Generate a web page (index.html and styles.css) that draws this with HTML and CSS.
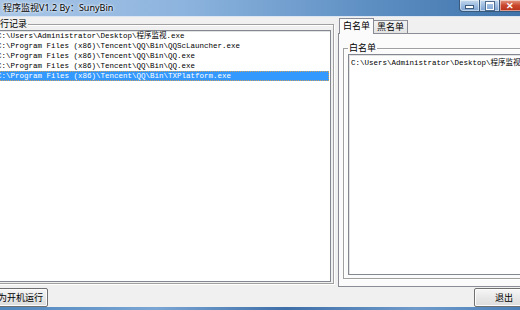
FILE: index.html
```html
<!DOCTYPE html>
<html lang="zh-CN">
<head>
    <meta charset="UTF-8">
    <title>程序监视V1.2 By：SunyBin</title>
    <link rel="stylesheet" href="styles.css">
</head>
<body>
    <div class="window">
        <!-- Title bar -->
        <div class="titlebar">
            <span class="title">程序监视V1.2 By：SunyBin</span>
            <div class="controls">
                <span class="ctl ctl-min"><i></i></span>
                <span class="ctl ctl-max"><i></i></span>
                <span class="ctl ctl-close">✕</span>
            </div>
        </div>

        <div class="client">
            <div class="main">
                <!-- Run log -->
                <div class="group log-group">
                    <div class="group-label">运行记录</div>
                    <ul class="listbox log-list">
                        <li>C:\Users\Administrator\Desktop\程序监视.exe</li>
                        <li>C:\Program Files (x86)\Tencent\QQ\Bin\QQScLauncher.exe</li>
                        <li>C:\Program Files (x86)\Tencent\QQ\Bin\QQ.exe</li>
                        <li>C:\Program Files (x86)\Tencent\QQ\Bin\QQ.exe</li>
                        <li class="selected">C:\Program Files (x86)\Tencent\QQ\Bin\TXPlatform.exe</li>
                    </ul>
                </div>

                <!-- White / black list tabs -->
                <div class="tabs">
                    <div class="tab-strip">
                        <span class="tab active">白名单</span>
                        <span class="tab">黑名单</span>
                    </div>
                    <div class="tab-page">
                        <div class="group white-group">
                            <div class="group-label">白名单</div>
                            <ul class="listbox white-list">
                                <li>C:\Users\Administrator\Desktop\程序监视.exe</li>
                            </ul>
                        </div>
                    </div>
                </div>
            </div>

            <div class="button-row">
                <button class="btn btn-autorun">设为开机运行</button>
                <button class="btn btn-exit">退出</button>
            </div>
        </div>

        <div class="taskbar"></div>
    </div>
</body>
</html>
```

FILE: styles.css
```css
html, body {
    margin: 0;
    padding: 0;
    overflow: hidden;
}

body {
    width: 520px;
    height: 310px;
    font-family: "Noto Sans", "Noto Sans CJK SC", sans-serif;
    font-size: 9px;
    color: #000;
    background-color: #f0f0f0;
}

.window {
    display: flex;
    flex-direction: column;
    width: 520px;
    height: 310px;
}

/* Title bar */
.titlebar {
    height: 16px;
    display: flex;
    align-items: flex-start;
    justify-content: space-between;
    background: linear-gradient(to right, #a9c6e6 0%, #8db4de 35%, #5f90c4 70%, #3f73aa 100%);
    border-bottom: 1px solid #dbe6f2;
}

.title {
    padding: 2px 0 0 3px;
    line-height: 11px;
    color: #000;
    text-shadow: 0 0 3px #fff, 0 0 3px #fff;
    white-space: nowrap;
}

.controls {
    display: flex;
    margin-right: -15px;
}

.ctl {
    display: flex;
    align-items: center;
    justify-content: center;
    width: 19px;
    height: 11px;
    border: 1px solid #38587c;
    border-top: none;
    background: linear-gradient(#c6d9ee, #9bbbe0 50%, #7aa0cf);
    box-shadow: inset 0 0 0 1px rgba(255, 255, 255, 0.5);
}

.ctl-min {
    border-radius: 0 0 0 4px;
}

.ctl-min i {
    display: block;
    width: 7px;
    height: 2px;
    margin-top: 3px;
    background: #fff;
    border: 1px solid #3d5a7c;
}

.ctl-max {
    border-left: none;
}

.ctl-max i {
    display: block;
    width: 6px;
    height: 5px;
    border: 1px solid #fff;
    border-top-width: 2px;
    outline: 1px solid #4d6c90;
}

.ctl-close {
    width: 28px;
    border-left: none;
    background: linear-gradient(#e49a86, #c9462c 50%, #b8311a);
    color: #fff;
    font-size: 9px;
    font-weight: bold;
    justify-content: flex-start;
    padding-left: 6px;
}

/* Client area */
.client {
    flex: 1;
    display: flex;
    flex-direction: column;
}

.main {
    display: flex;
    height: 270px;
}

.group {
    border: 1px solid #a0a0a0;
    box-shadow: 1px 1px 0 #fff, inset 1px 1px 0 #fff;
}

.group-label {
    display: inline-block;
    margin-top: -7px;
    padding: 0 1px;
    line-height: 12px;
    background-color: #f0f0f0;
    white-space: nowrap;
}

.log-group {
    flex: none;
    width: 337px;
    height: 257px;
    margin: 7px 0 0 -8px;
    padding: 0 2px 1px 1px;
    display: flex;
    flex-direction: column;
}

.log-group .group-label {
    margin-left: -4px;
    align-self: flex-start;
}

.listbox {
    list-style: none;
    margin: 0;
    padding: 0 0 0 2px;
    background-color: #fff;
    border: 1px solid #828790;
    box-shadow: inset 1px 1px 0 #e3e3e3;
    font-family: "Liberation Mono", "Noto Sans CJK SC", monospace;
    font-size: 7.5px;
    overflow: hidden;
}

.listbox li {
    height: 10px;
    line-height: 10px;
    white-space: nowrap;
}

.log-list {
    flex: 1;
    margin-top: 0;
}

.log-list li.selected {
    background-color: #3399ff;
    color: #fff;
    outline: 1px dotted #c8a060;
    outline-offset: -1px;
    margin-right: 1px;
}

/* Tabs */
.tabs {
    margin-left: 4px;
    flex: 1;
    min-width: 0;
    display: flex;
    flex-direction: column;
    padding-top: 1px;
}

.tab-strip {
    display: flex;
    align-items: flex-end;
    height: 15px;
    padding-left: 1px;
}

.tab {
    height: 12px;
    line-height: 12px;
    padding: 0 3px;
    border: 1px solid #898c95;
    border-bottom: none;
    border-left: none;
    background: linear-gradient(#f2f2f2, #e3e3e3);
}

.tab.active {
    height: 15px;
    line-height: 13px;
    border-left: 1px solid #898c95;
    background: #fbfbfb;
    margin-bottom: -1px;
    position: relative;
    z-index: 1;
}

.tab-page {
    height: 253px;
    border: 1px solid #898c95;
    border-right: none;
    background-color: #fbfbfb;
    padding: 14px 0 0 4px;
}

.white-group {
    height: 226px;
    padding: 0 0 3px 4px;
    border-right: none;
    display: flex;
    flex-direction: column;
}

.white-group .group-label {
    align-self: flex-start;
    margin-left: 0;
    background-color: #fbfbfb;
}

.white-list {
    flex: 1;
    padding-left: 2px;
    padding-top: 3px;
    border-right: none;
}

/* Bottom buttons */
.button-row {
    display: flex;
    justify-content: space-between;
    align-items: center;
    height: 20px;
}

.btn {
    height: 19px;
    padding: 0 4px;
    font-family: "Noto Sans", "Noto Sans CJK SC", sans-serif;
    font-size: 9px;
    color: #000;
    background: linear-gradient(#f6f6f6, #e8e8e8 50%, #dddddd);
    border: 1px solid #707070;
    border-radius: 2px;
    box-shadow: inset 0 0 0 1px #fcfcfc;
}

.btn-autorun {
    margin-left: -21px;
    width: 69px;
    text-align: right;
}

.btn-exit {
    width: 50px;
    margin-right: -4px;
    text-align: left;
    padding-left: 20px;
}

.taskbar {
    height: 3px;
    background: linear-gradient(to right, #4f86bd, #7aa6d4 30%, #3f6fa8 55%, #6f9bcb 80%, #4a7fb8);
}
```
